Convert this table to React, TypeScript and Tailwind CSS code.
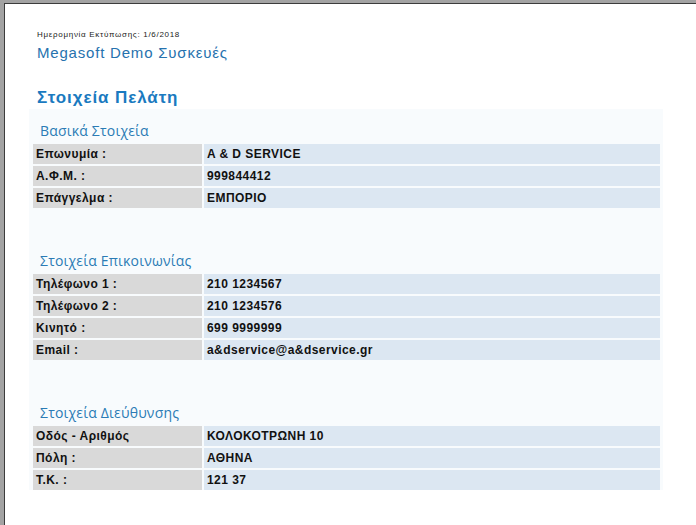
import React from "react";

const Row = ({ label, value }: { label: string; value: string }) => (
  <div className="flex h-[20px] gap-[2px] mb-[2px] text-[12px] font-bold text-[#111] tracking-[0.45px]">
    <div className="w-[169px] bg-[#d9d9d9] pl-[3px] flex items-center">{label}</div>
    <div className="flex-1 bg-[#dce7f2] pl-[3px] flex items-center">{value}</div>
  </div>
);

const Section = ({ title, rows, mt }: { title: string; rows: [string, string][]; mt: string }) => (
  <div className={mt}>
    <div className="pl-[7px] h-[22px] flex items-end pb-[1px] text-[14px] tracking-[0.2px] text-[#2b7bb5]" style={{ fontFamily: '"Open Sans", sans-serif' }}>{title}</div>
    <div className="mt-[2px]">
      {rows.map(([l, v]) => (
        <Row key={l} label={l} value={v} />
      ))}
    </div>
  </div>
);

export default function App() {
  return (
    <div className="w-[696px] h-[525px] bg-[#a3a3a3] pl-[4px] pt-[3px] overflow-hidden" style={{ fontFamily: '"Liberation Sans", Arial, sans-serif' }}>
      <div className="w-full h-full bg-white border-l border-t border-[#3c3c3c] relative">
        <div className="pl-[32px] pt-[26px]">
          <div className="text-[8px] tracking-[0.7px] text-[#222] leading-[10px]">Ημερομηνία Εκτύπωσης: 1/6/2018</div>
          <div className="text-[15px] text-[#2672ae] leading-[18px] mt-[4px] tracking-[0.8px]">Megasoft Demo Συσκευές</div>
          <div className="text-[17px] font-bold text-[#1a7ac0] leading-[20px] mt-[26px] tracking-[0.9px]">Στοιχεία Πελάτη</div>
        </div>
        <div className="ml-[24px] mt-[1px] w-[634px] h-[381px] bg-[#f8fbfd] pt-[11px] pl-[4px] pr-[3px]">
          <Section
            title="Βασικά Στοιχεία"
            mt=""
            rows={[
              ["Επωνυμία :", "A & D SERVICE"],
              ["Α.Φ.Μ. :", "999844412"],
              ["Επάγγελμα :", "ΕΜΠΟΡΙΟ"],
            ]}
          />
          <Section
            title="Στοιχεία Επικοινωνίας"
            mt="mt-[42px]"
            rows={[
              ["Τηλέφωνο 1 :", "210 1234567"],
              ["Τηλέφωνο 2 :", "210 1234576"],
              ["Κινητό :", "699 9999999"],
              ["Email :", "a&dservice@a&dservice.gr"],
            ]}
          />
          <Section
            title="Στοιχεία Διεύθυνσης"
            mt="mt-[42px]"
            rows={[
              ["Οδός - Αριθμός", "ΚΟΛΟΚΟΤΡΩΝΗ 10"],
              ["Πόλη :", "ΑΘΗΝΑ"],
              ["Τ.Κ. :", "121 37"],
            ]}
          />
        </div>
      </div>
    </div>
  );
}
